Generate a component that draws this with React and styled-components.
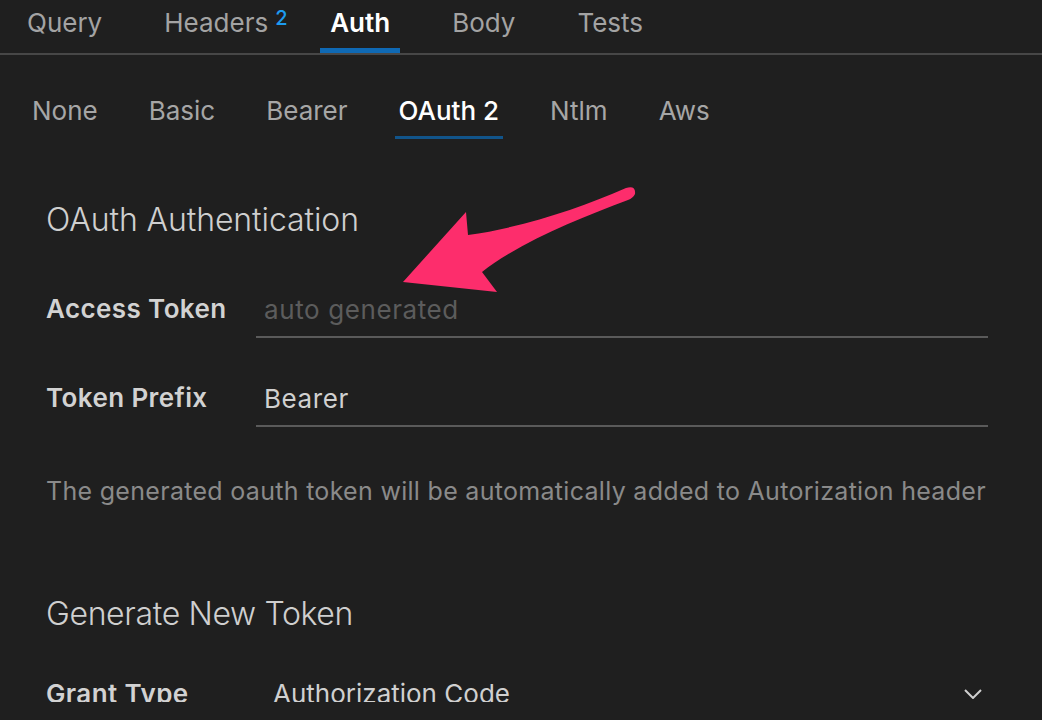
import React from 'react';
import styled, { createGlobalStyle } from 'styled-components';

const GlobalStyle = createGlobalStyle`
  html, body {
    margin: 0;
    padding: 0;
    background: #1f1f1f;
  }
  body {
    font-family: Inter, "Noto Sans", "DejaVu Sans", sans-serif;
  }
`;

const Page = styled.div`
  position: relative;
  width: 1042px;
  height: 702px;
  overflow: hidden;
  background: #1f1f1f;
  color: #cccccc;
`;

const TopBar = styled.div`
  display: flex;
  gap: 42px;
  padding-left: 17px;
  border-bottom: 2px solid #474747;
`;

const TopTab = styled.div`
  position: relative;
  padding: 7px 10px 9px;
  font-size: 26px;
  line-height: 32px;
  font-weight: ${p => (p.active ? 600 : 400)};
  color: ${p => (p.active ? '#ffffff' : '#a3a3a3')};
  border-bottom: 5px solid ${p => (p.active ? '#0f69b4' : 'transparent')};
`;

const Badge = styled.span`
  position: absolute;
  left: calc(100% - 3px);
  top: 7px;
  font-size: 20px;
  line-height: 22px;
  font-weight: 500;
  color: #1d9bf0;
`;

const SubBar = styled.div`
  display: flex;
  gap: 43px;
  padding-left: 28px;
  margin-top: 40px;
`;

const SubTab = styled.div`
  padding: 0 4px 9px;
  font-size: 26px;
  line-height: 32px;
  font-weight: ${p => (p.active ? 500 : 400)};
  color: ${p => (p.active ? '#ffffff' : '#a6a6a6')};
  border-bottom: 3px solid ${p => (p.active ? '#11548a' : 'transparent')};
`;

const Content = styled.div`
  padding: 0 54px 0 46px;
`;

const SectionTitle = styled.h2`
  margin: ${p => p.top}px 0 0;
  font-size: 32px;
  line-height: 40px;
  font-weight: 300;
  letter-spacing: ${p => p.spacing || 0}px;
  color: #cfcfcf;
`;

const Field = styled.div`
  display: grid;
  grid-template-columns: 210px 1fr;
  margin-top: ${p => p.top}px;
`;

const Label = styled.label`
  font-size: 26px;
  line-height: 32px;
  font-weight: 600;
  letter-spacing: 0.4px;
  color: #d2d2d2;
`;

const Input = styled.input`
  display: block;
  width: 100%;
  box-sizing: border-box;
  padding: 0 8px 11px;
  margin: 0;
  background: transparent;
  border: none;
  border-bottom: 2px solid #5a5a5a;
  outline: none;
  font-family: inherit;
  font-size: 26px;
  line-height: 32px;
  letter-spacing: 0.6px;
  height: 45px;
  color: #d0d0d0;
  &::placeholder {
    color: #5c5c5c;
  }
`;

const Hint = styled.p`
  margin: 48px 0 0;
  font-size: 25px;
  line-height: 32px;
  letter-spacing: 0.3px;
  color: #8a8a8a;
  white-space: nowrap;
`;

const Select = styled.div`
  display: flex;
  align-items: center;
  justify-content: space-between;
  padding: 0 6px 0 17px;
  font-size: 26px;
  line-height: 32px;
  color: #d0d0d0;
`;

const Arrow = styled.svg`
  position: absolute;
  left: 0;
  top: 0;
  pointer-events: none;
`;

const topTabs = ['Query', 'Headers', 'Auth', 'Body', 'Tests'];
const subTabs = ['None', 'Basic', 'Bearer', 'OAuth 2', 'Ntlm', 'Aws'];

export default function App() {
  return (
    <>
      <GlobalStyle />
      <Page>
        <TopBar>
          {topTabs.map(t => (
            <TopTab key={t} active={t === 'Auth'}>
              {t}
              {t === 'Headers' && <Badge>2</Badge>}
            </TopTab>
          ))}
        </TopBar>
        <SubBar>
          {subTabs.map(t => (
            <SubTab key={t} active={t === 'OAuth 2'}>{t}</SubTab>
          ))}
        </SubBar>
        <Content>
          <SectionTitle top={61} spacing={-0.1}>OAuth Authentication</SectionTitle>
          <Field top={53}>
            <Label>Access Token</Label>
            <Input placeholder="auto generated" readOnly />
          </Field>
          <Field top={44}>
            <Label>Token Prefix</Label>
            <Input defaultValue="Bearer" />
          </Field>
          <Hint>The generated oauth token will be automatically added to Autorization header</Hint>
          <SectionTitle top={87} spacing={-0.35}>Generate New Token</SectionTitle>
          <Field top={44}>
            <Label>Grant Type</Label>
            <Select>
              <span>Authorization Code</span>
              <svg width="18" height="10" viewBox="0 0 18 10">
                <path d="M1 1 L9 9 L17 1" fill="none" stroke="#cfcfcf" strokeWidth="2" />
              </svg>
            </Select>
          </Field>
        </Content>
        <Arrow width="1042" height="720" viewBox="0 0 1042 720">
          <path
            d="M403 282 L466 212 L468 235 C525 227 580 208 626 188 Q636 185 635 194 Q633 198 628 200 C580 218 520 242 482 272 L497 292 Z"
            fill="#fd2d6c"
          />
        </Arrow>
      </Page>
    </>
  );
}
